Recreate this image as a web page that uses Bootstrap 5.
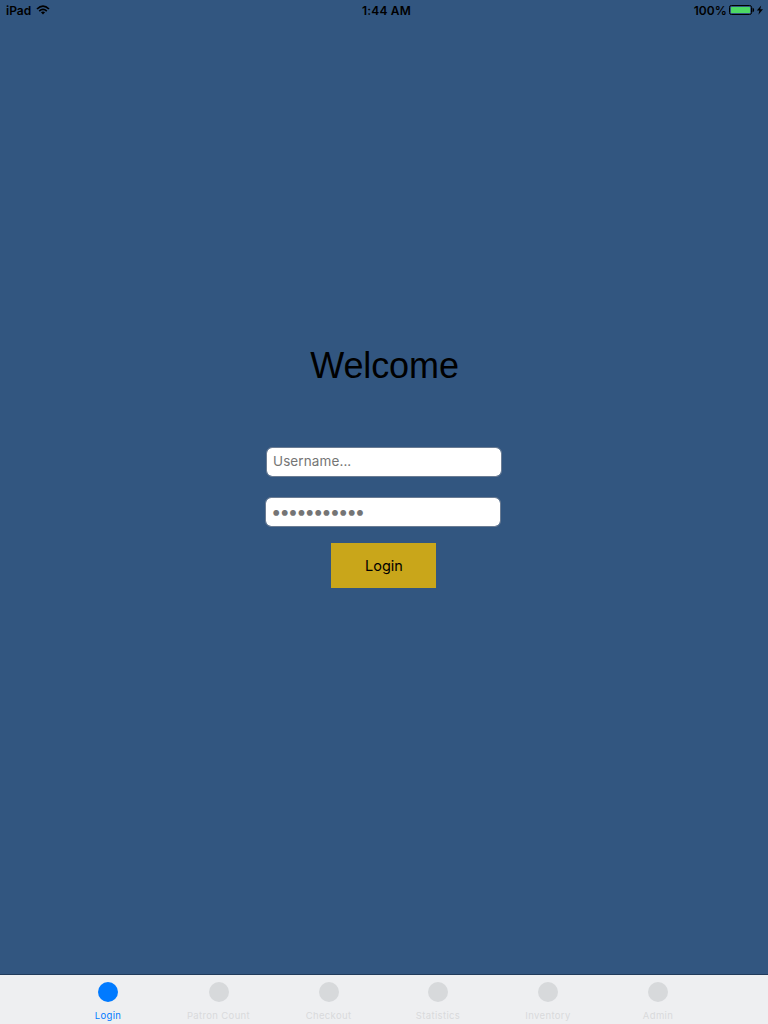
<!DOCTYPE html>
<html lang="en">
<head>
<meta charset="utf-8">
<meta name="viewport" content="width=device-width, initial-scale=1">
<title>Login</title>
<link href="https://cdn.jsdelivr.net/npm/bootstrap@5.3.0/dist/css/bootstrap.min.css" rel="stylesheet">
<style>
body { font-family: Inter, "Liberation Sans", sans-serif; background: #325680; color: #000; }
.status-bar { height: 20px; padding: 1px 5px 0 6px; font-size: 12px; font-weight: 600; line-height: 20px; }
.status-bar > div { flex: 1 1 0; }
.status-bar svg { display: block; }
.wifi { margin: 4px 0 0 5px; }
.battery { margin: 4px 0 0 2px; }
.clock { letter-spacing: .2px; padding-left: 4px; }
.power { letter-spacing: .1px; }
.welcome { margin: 323px 0 0 1px; font: 400 36px/46px "Liberation Sans", sans-serif; letter-spacing: -.1px; }
.field { width: 236px; height: 30px; padding: 0 6px; border: 1px solid #6b7c93; border-radius: 6px; font-size: 13.5px; line-height: 28px; color: #000; }
.field::placeholder { color: #757575; opacity: 1; }
.user-field { margin: 58px 0 0 0; padding-bottom: 2px; letter-spacing: .1px; }
.pass-field { margin: 20px 0 0 -2px; padding: 2px 0 0 5px; }
.pass-field::placeholder { font-size: 18.5px; letter-spacing: -2.02px; }
.login-btn { width: 105px; height: 45px; margin: 16px 1px 0 0; padding: 0 0 0 1px; border: 0; background: #c9a61a; color: #000; font-size: 14.5px; }
.tab-bar { height: 50px; padding: 0 53px 0 53px; background: #eeeff1; border-top: 1px solid #203b5b; }
.tab-link { width: 110px; padding: 7px 0 0; font-size: 9.5px; line-height: 12px; font-weight: 400; letter-spacing: .35px; color: #d9dadc; }
.tab-link.active { color: #007aff; }
.dot { width: 20px; height: 20px; margin-bottom: 8px; background: #d7d9db; }
.active .dot { background: #007aff; }
.nudge { padding-left: 1px; }
</style>
<script src="https://cdn.jsdelivr.net/npm/bootstrap@5.3.0/dist/js/bootstrap.bundle.min.js"></script>
</head>
<body class="vh-100 d-flex flex-column overflow-hidden">
<header class="status-bar d-flex">
  <div class="device d-flex align-items-start"><span>iPad</span>
    <svg class="wifi" width="14" height="10" viewBox="0 0 14 10" fill="none" stroke="#000" stroke-width="1.7"><path d="M1 4Q7-1.7 13 4M3.2 6.1Q7 2.7 10.8 6.1"/><path d="M4.9 7.3Q7 5.6 9.1 7.3L7 9.5Z" fill="#000" stroke="none"/></svg>
  </div>
  <div class="clock text-center">1:44 AM</div>
  <div class="power d-flex justify-content-end"><span>100%</span>
    <svg class="battery" width="34" height="10" viewBox="0 0 34 10"><rect x=".5" y=".5" width="22" height="9" rx="1.8" fill="none" stroke="#000"/><rect x="2" y="2" width="19" height="6" rx=".5" fill="#4cd964"/><path d="M23.5 2.5Q25.2 3.2 25.2 5T23.5 7.5Z"/><path d="M32.2 .5L27.8 5.6H30.4L29.4 9.7L34 4.3H31.2Z"/></svg>
  </div>
</header>
<main class="flex-grow-1 d-flex flex-column align-items-center">
  <h1 class="welcome">Welcome</h1>
  <form class="d-flex flex-column align-items-center">
    <input class="form-control field user-field" type="text" placeholder="Username..." aria-label="Username">
    <input class="form-control field pass-field" type="password" placeholder="•••••••••••" aria-label="Password">
    <button class="btn rounded-0 login-btn" type="button">Login</button>
  </form>
</main>
<nav class="tab-bar nav flex-nowrap">
  <a class="nav-link tab-link active d-flex flex-column align-items-center" href="#"><span class="dot rounded-circle"></span>Login</a>
  <a class="nav-link tab-link nudge d-flex flex-column align-items-center" href="#"><span class="dot rounded-circle"></span>Patron Count</a>
  <a class="nav-link tab-link nudge d-flex flex-column align-items-center" href="#"><span class="dot rounded-circle"></span>Checkout</a>
  <a class="nav-link tab-link d-flex flex-column align-items-center" href="#"><span class="dot rounded-circle"></span>Statistics</a>
  <a class="nav-link tab-link d-flex flex-column align-items-center" href="#"><span class="dot rounded-circle"></span>Inventory</a>
  <a class="nav-link tab-link d-flex flex-column align-items-center" href="#"><span class="dot rounded-circle"></span>Admin</a>
</nav>
</body>
</html>
